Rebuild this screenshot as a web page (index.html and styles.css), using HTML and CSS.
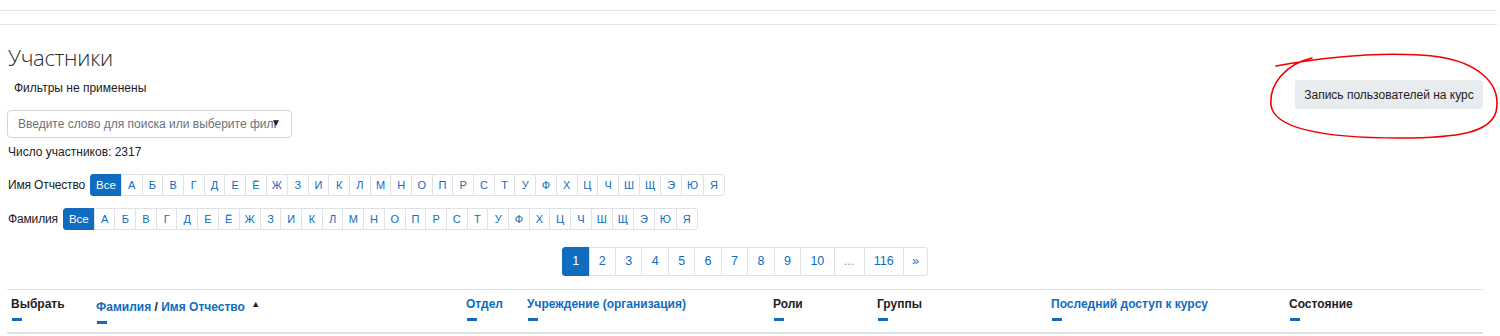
FILE: index.html
```html
<!DOCTYPE html>
<html lang="ru">
<head>
    <meta charset="UTF-8">
    <meta name="viewport" content="width=device-width, initial-scale=1.0">
    <title>Участники</title>
    <link rel="stylesheet" href="styles.css">
</head>
<body>
    <!-- Top bars -->
    <div class="topbar"></div>
    <div class="subbar"></div>

    <div class="page">
        <div class="page-head">
            <div class="page-left">
                <h2>Участники</h2>
                <p class="filters-note">Фильтры не применены</p>
                <div class="search">
                    <span class="placeholder">Введите слово для поиска или выберите фильтр</span>
                    <span class="caret">&#9660;</span>
                </div>
                <p class="count">Число участников: 2317</p>
            </div>
            <div class="page-right">
                <button class="enrol-btn">Запись пользователей на курс</button>
            </div>
        </div>

        <div class="initials">
            <span class="initials-label">Имя Отчество</span>
            <ul class="letters" id="firstname"></ul>
        </div>
        <div class="initials">
            <span class="initials-label">Фамилия</span>
            <ul class="letters" id="lastname"></ul>
        </div>

        <nav class="pager">
            <ul class="pagination">
                <li class="active">1</li>
                <li>2</li>
                <li>3</li>
                <li>4</li>
                <li>5</li>
                <li>6</li>
                <li>7</li>
                <li>8</li>
                <li>9</li>
                <li>10</li>
                <li class="dots">...</li>
                <li>116</li>
                <li class="next">&raquo;</li>
            </ul>
        </nav>

        <div class="table-head">
            <div class="th"><span class="plain">Выбрать</span><i class="dash"></i></div>
            <div class="th"><span><a>Фамилия</a> <span class="plain">/</span> <a>Имя Отчество</a> <span class="sort">&#9650;</span></span><i class="dash"></i></div>
            <div class="th"><a>Отдел</a><i class="dash"></i></div>
            <div class="th"><a>Учреждение (организация)</a><i class="dash"></i></div>
            <div class="th"><span class="plain">Роли</span><i class="dash"></i></div>
            <div class="th"><span class="plain">Группы</span><i class="dash"></i></div>
            <div class="th"><a>Последний доступ к курсу</a><i class="dash"></i></div>
            <div class="th"><span class="plain">Состояние</span><i class="dash"></i></div>
        </div>
    </div>

    <!-- hand-drawn mark around the button -->
    <svg class="scribble" width="240" height="95" viewBox="0 0 240 95">
        <path d="M16 16 C60 8 110 2 160 5 C220 8 242 35 236 62 C230 82 200 88 140 88 C70 88 14 80 11 55 C9 35 25 14 52 8" fill="none" stroke="#f00000" stroke-width="1.6" stroke-linecap="round"/>
    </svg>

    <script>
        const letters = ['А','Б','В','Г','Д','Е','Ё','Ж','З','И','К','Л','М','Н','О','П','Р','С','Т','У','Ф','Х','Ц','Ч','Ш','Щ','Э','Ю','Я'];

        function fillLetters(id) {
            const ul = document.getElementById(id);
            const all = document.createElement('li');
            all.className = 'active';
            all.textContent = 'Все';
            ul.appendChild(all);
            letters.forEach((l) => {
                const li = document.createElement('li');
                li.textContent = l;
                ul.appendChild(li);
            });
        }

        fillLetters('firstname');
        fillLetters('lastname');
    </script>
</body>
</html>
```

FILE: styles.css
```css
/* General */
body {
    margin: 0;
    padding: 0;
    font-family: 'Liberation Sans', Arial, sans-serif;
    font-size: 13px;
    color: #1d2125;
    background: #fff;
    position: relative;
    height: 336px;
    overflow: hidden;
}

/* Top bars */
.topbar {
    height: 10px;
    width: 1497px;
    border-bottom: 1px solid #e2e2e2;
}

.subbar {
    height: 13px;
    width: 1497px;
    border-bottom: 1px solid #e2e2e2;
}

.page {
    padding: 0 17px 0 7px;
}

/* Heading block */
.page-head {
    display: flex;
    justify-content: space-between;
    align-items: flex-start;
}

h2 {
    margin: 18px 0 0 1px;
    font-family: 'Open Sans', 'Liberation Sans', sans-serif;
    font-size: 22px;
    font-weight: 300;
    line-height: 28px;
    color: #2b2f33;
    letter-spacing: -0.3px;
}

.filters-note {
    margin: 8px 0 0 7px;
    font-size: 12px;
    line-height: 18px;
}

.search {
    margin-top: 13px;
    width: 283px;
    height: 26px;
    border: 1px solid #ced4da;
    border-radius: 4px;
    display: flex;
    align-items: center;
    position: relative;
    overflow: hidden;
}

.placeholder {
    margin-left: 10px;
    color: #6a737b;
    font-size: 12px;
    white-space: nowrap;
    width: 258px;
    overflow: hidden;
}

.caret {
    position: absolute;
    left: 263px;
    top: 6px;
    font-size: 10px;
    color: #222;
}

.count {
    margin: 5px 0 0 1px;
    font-size: 12px;
    line-height: 18px;
}

.page-right {
    padding-top: 55px;
}

.enrol-btn {
    font-family: inherit;
    font-size: 12px;
    color: #1d2125;
    background: #e9ecef;
    border: none;
    border-radius: 3px;
    width: 188px;
    height: 29px;
    cursor: pointer;
}

/* Initials bars */
.initials {
    display: flex;
    align-items: center;
    margin: 13px 0 0 1px;
}

.initials + .initials {
    margin-top: 12px;
}

.initials-label {
    font-size: 12px;
    margin-right: 5px;
    letter-spacing: -0.15px;
}

.letters {
    display: flex;
    list-style: none;
    margin: 0;
    padding: 0;
}

.letters li {
    height: 20px;
    line-height: 20px;
    min-width: 9.7px;
    padding: 0 5px;
    text-align: center;
    font-size: 11px;
    color: #0f6cbf;
    border: 1px solid #dee2e6;
    margin-left: -1px;
}

.letters li:last-child {
    border-radius: 0 3px 3px 0;
}

.letters li.active {
    background: #0f6cbf;
    border-color: #0f6cbf;
    color: #fff;
    border-radius: 3px 0 0 3px;
    margin-left: 0;
    padding: 0 5px;
    font-size: 11.5px;
}

/* Pagination */
.pager {
    display: flex;
    justify-content: center;
    margin-top: 17px;
}

.pagination {
    display: flex;
    list-style: none;
    margin: 0;
    padding: 0;
}

.pagination li {
    height: 27px;
    line-height: 27px;
    padding: 0 9.25px;
    font-size: 12.5px;
    color: #0f6cbf;
    border: 1px solid #dee2e6;
    margin-left: -1px;
}

.pagination li.active {
    background: #0f6cbf;
    border-color: #0f6cbf;
    color: #fff;
    border-radius: 3px 0 0 3px;
    margin-left: 0;
}

.pagination li.dots {
    color: #8a9199;
}

.pagination li.next {
    border-radius: 0 3px 3px 0;
    padding: 0 8px;
}

/* Table header */
.table-head {
    margin-top: 13px;
    display: grid;
    grid-template-columns: 85px 370px 61px 246px 104px 174px 238px 1fr;
    border-top: 1px solid #dee2e6;
    border-bottom: 2px solid #dee2e6;
    height: 42px;
}

.th {
    padding: 6px 0 0 4px;
    font-weight: bold;
    font-size: 12px;
    line-height: 16px;
    display: flex;
    flex-direction: column;
    align-items: flex-start;
}

.th a {
    color: #0f6cbf;
    text-decoration: none;
}

.th .plain {
    color: #1d2125;
}

.sort {
    font-size: 9px;
    vertical-align: 4px;
    color: #1d2125;
    margin-left: 3px;
}

.dash {
    display: block;
    width: 10px;
    height: 3px;
    background: #0f6cbf;
    margin: 6px 0 0 1px;
}

/* Annotation */
.scribble {
    position: absolute;
    left: 1260px;
    top: 50px;
}
```
